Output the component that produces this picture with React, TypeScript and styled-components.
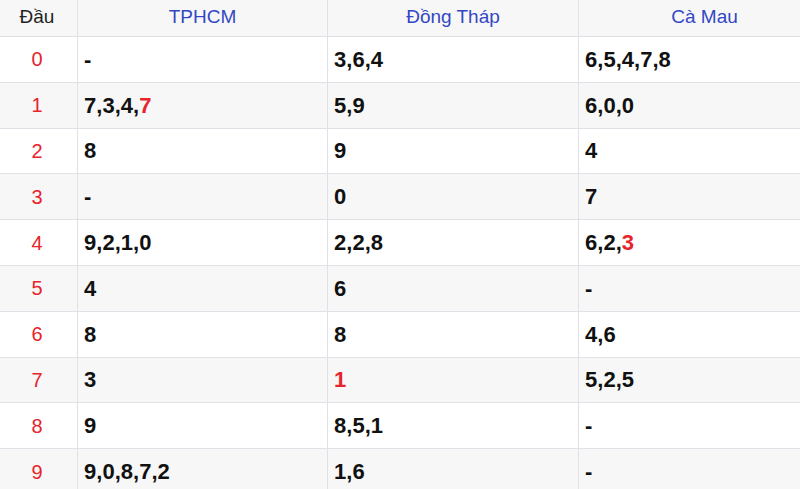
import React from "react";
import styled, { createGlobalStyle } from "styled-components";

const Global = createGlobalStyle`
  html, body { margin: 0; padding: 0; background: #fff; overflow: hidden; }
  body { font-family: "Liberation Sans", Arial, sans-serif; }
`;

const Table = styled.div`
  width: 830px;
  display: grid;
  grid-template-columns: 77px 250px 251px 252px;
`;

const HeadCell = styled.div<{ $first?: boolean }>`
  height: 37px;
  box-sizing: border-box;
  display: flex;
  align-items: center;
  justify-content: center;
  background: #f7f7f7;
  border-bottom: 1px solid #dfe1e6;
  border-left: ${(p) => (p.$first ? "none" : "1px solid #dfe1e6")};
  color: ${(p) => (p.$first ? "#222" : "#3347c4")};
  font-size: 19px;
  padding-bottom: 2px;
  padding-right: ${(p) => (p.$first ? "3px" : "0")};
`;

const Cell = styled.div<{ $odd: boolean; $first?: boolean }>`
  height: 45.8px;
  box-sizing: border-box;
  display: flex;
  align-items: center;
  justify-content: ${(p) => (p.$first ? "center" : "flex-start")};
  padding-left: ${(p) => (p.$first ? "0" : "6px")};
  padding-right: ${(p) => (p.$first ? "3px" : "0")};
  background: ${(p) => (p.$odd ? "#f7f7f7" : "#fff")};
  border-bottom: 1px solid #dfe1e6;
  border-left: ${(p) => (p.$first ? "none" : "1px solid #dfe1e6")};
  color: ${(p) => (p.$first ? "#e8232b" : "#111")};
  font-size: ${(p) => (p.$first ? "20px" : "22px")};
  font-weight: ${(p) => (p.$first ? 400 : 700)};
  padding-top: 1px;
`;

const Hit = styled.span`
  color: #e8232b;
`;

type Val = string;
const rows: Val[][] = [
  ["-", "3,6,4", "6,5,4,7,8"],
  ["7,3,4,*7", "5,9", "6,0,0"],
  ["8", "9", "4"],
  ["-", "0", "7"],
  ["9,2,1,0", "2,2,8", "6,2,*3"],
  ["4", "6", "-"],
  ["8", "8", "4,6"],
  ["3", "*1", "5,2,5"],
  ["9", "8,5,1", "-"],
  ["9,0,8,7,2", "1,6", "-"],
];

function renderVal(v: string) {
  const parts = v.split(",");
  return parts.map((p, i) => (
    <React.Fragment key={i}>
      {i > 0 && ","}
      {p.startsWith("*") ? <Hit>{p.slice(1)}</Hit> : p}
    </React.Fragment>
  ));
}

export default function App() {
  return (
    <>
      <Global />
      <Table>
        <HeadCell $first>Đầu</HeadCell>
        <HeadCell>TPHCM</HeadCell>
        <HeadCell>Đồng Tháp</HeadCell>
        <HeadCell>Cà Mau</HeadCell>
        {rows.map((r, i) => (
          <React.Fragment key={i}>
            <Cell $odd={i % 2 === 1} $first>
              {i}
            </Cell>
            {r.map((v, j) => (
              <Cell key={j} $odd={i % 2 === 1}>
                {renderVal(v)}
              </Cell>
            ))}
          </React.Fragment>
        ))}
      </Table>
    </>
  );
}
